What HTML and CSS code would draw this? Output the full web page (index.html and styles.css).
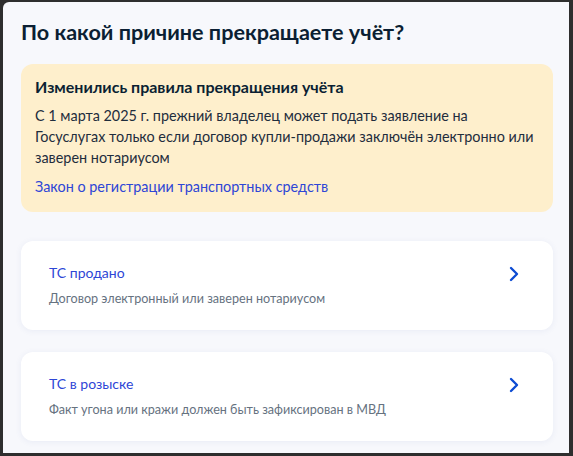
FILE: index.html
```html
<!DOCTYPE html>
<html lang="ru">
<head>
<meta charset="utf-8">
<link rel="stylesheet" href="styles.css">
</head>
<body>
<div class="frame">
  <h1 class="title">По какой причине прекращаете учёт?</h1>
  <div class="notice">
    <div class="notice-title">Изменились правила прекращения учёта</div>
    <p class="notice-text">С 1 марта 2025 г. прежний владелец может подать заявление на Госуслугах только если договор купли-продажи заключён электронно или заверен нотариусом</p>
    <a class="notice-link" href="#">Закон о регистрации транспортных средств</a>
  </div>
  <div class="options">
    <a class="card" href="#">
      <div class="card-body">
        <div class="card-title">ТС продано</div>
        <div class="card-sub">Договор электронный или заверен нотариусом</div>
      </div>
      <svg class="chev" width="10" height="16" viewBox="0 0 10 16"><path d="M2 2l6 6-6 6" fill="none" stroke="#0d4cd3" stroke-width="2.4" stroke-linecap="round" stroke-linejoin="round"/></svg>
    </a>
    <a class="card" href="#">
      <div class="card-body">
        <div class="card-title">ТС в розыске</div>
        <div class="card-sub">Факт угона или кражи должен быть зафиксирован в МВД</div>
      </div>
      <svg class="chev" width="10" height="16" viewBox="0 0 10 16"><path d="M2 2l6 6-6 6" fill="none" stroke="#0d4cd3" stroke-width="2.4" stroke-linecap="round" stroke-linejoin="round"/></svg>
    </a>
  </div>
</div>
</body>
</html>
```

FILE: styles.css
```css
html, body {
  margin: 0;
  height: 100%;
}
body {
  background: #2e2e2e;
  padding: 2px 4px 3px 3px;
  box-sizing: border-box;
  font-family: Lato, "Noto Sans", sans-serif;
  color: #0b1f33;
}
.frame {
  height: 100%;
  box-sizing: border-box;
  background: #f7f8fc;
  border-radius: 6px 0 0 0;
  padding: 16px 16px 0 18px;
  overflow: hidden;
}
.title {
  margin: 0 0 18px;
  font-size: 21.6px;
  line-height: 28px;
  font-weight: 700;
  color: #0b1f33;
}
.notice {
  background: #feefcc;
  border-radius: 12px;
  padding: 11px 14px 15px 14px;
}
.notice-title {
  font-size: 16px;
  line-height: 24px;
  font-weight: 700;
}
.notice-text {
  margin: 6px 0 8px;
  font-size: 14.4px;
  line-height: 21px;
  color: #1f2d3d;
}
.notice-link {
  display: block;
  font-size: 14.4px;
  line-height: 21px;
  color: #2e46d6;
  text-decoration: none;
}
.options {
  display: flex;
  flex-direction: column;
  gap: 22px;
  margin-top: 29px;
}
.card {
  display: flex;
  align-items: flex-start;
  justify-content: space-between;
  height: 89px;
  box-sizing: border-box;
  background: #ffffff;
  border-radius: 12px;
  padding: 22px 34px 0 28px;
  text-decoration: none;
  box-shadow: 0 1px 6px rgba(60, 90, 160, 0.08);
}
.card-title {
  font-size: 14px;
  line-height: 20px;
  color: #2e46d6;
}
.card-sub {
  margin-top: 6px;
  font-size: 12.6px;
  line-height: 20px;
  color: #66727f;
}
.chev {
  margin-top: 3px;
}
```
